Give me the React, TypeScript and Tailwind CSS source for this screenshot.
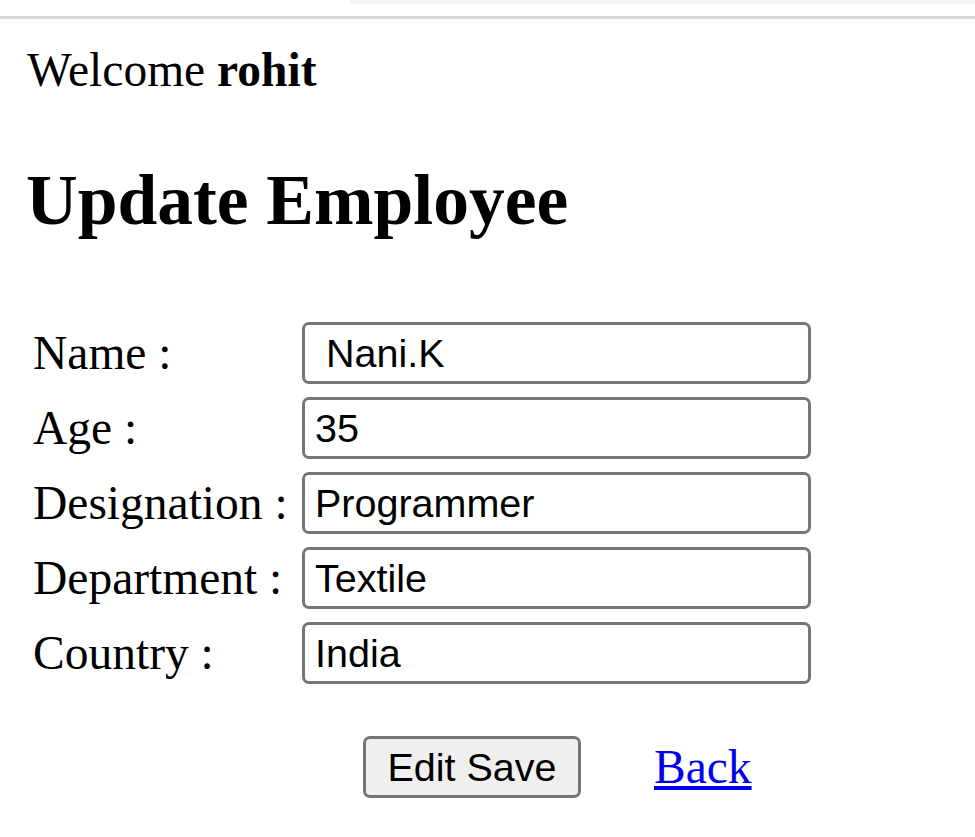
import React from "react";

const rows: { label: string; value: string }[] = [
  { label: "Name :", value: " Nani.K" },
  { label: "Age :", value: "35" },
  { label: "Designation :", value: "Programmer" },
  { label: "Department :", value: "Textile" },
  { label: "Country :", value: "India" },
];

export default function App() {
  const serif = { fontFamily: '"Liberation Serif", "Times New Roman", serif' };
  const sans = { fontFamily: '"Liberation Sans", Arial, sans-serif' };
  return (
    <div className="w-[975px] h-[837px] bg-white overflow-hidden text-black">
      <div className="h-[16px] flex">
        <div className="w-[350px]" />
        <div className="flex-1 h-[4px] bg-[#f1f3f4] rounded-bl-[14px]" />
      </div>
      <div className="h-[3px] bg-[#dadada]" />

      <div style={serif} className="pl-[27px] mt-[24px] text-[47.5px] leading-[54px]">
        Welcome <b>rohit</b>
      </div>

      <h2 style={serif} className="pl-[26px] mt-[67px] text-[71.5px] leading-[72px] font-bold">
        Update Employee
      </h2>

      <div className="mt-[86px] grid grid-cols-[269px_509px] gap-y-[13px] pl-[33px]">
        {rows.map((r) => (
          <React.Fragment key={r.label}>
            <div style={serif} className="h-[62px] flex items-center text-[47.5px] leading-[54px] whitespace-nowrap">
              {r.label}
            </div>
            <input
              readOnly
              value={r.value}
              style={sans}
              className="h-[62px] w-[509px] border-[3px] border-[#767676] rounded-[7px] pl-[10px] text-[39.5px] leading-[45px] bg-white outline-none whitespace-pre"
            />
          </React.Fragment>
        ))}
      </div>

      <div className="mt-[52px] flex items-center pl-[363px]">
        <button
          style={sans}
          className="h-[62px] w-[218px] border-[3px] border-[#767676] rounded-[7px] bg-[#efefef] text-[39.5px] leading-[45px] text-black"
        >
          Edit Save
        </button>
        <a
          href="#"
          style={serif}
          className="ml-[73px] text-[47.5px] leading-[54px] text-[#0000ee] underline"
        >
          Back
        </a>
      </div>
    </div>
  );
}
